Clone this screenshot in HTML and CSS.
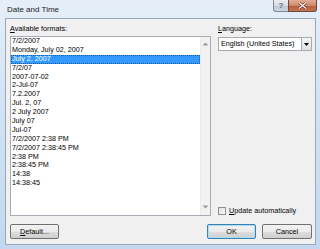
FILE: index.html
```html
<!DOCTYPE html>
<html>
<head>
<meta charset="utf-8">
<link rel="stylesheet" href="styles.css">
</head>
<body>
<div class="window">
  <div class="titlebar">
    <span class="title">Date and Time</span>
    <div class="controls">
      <span class="btn-help">?</span>
      <span class="btn-close"><svg width="9" height="7" viewBox="0 0 9 7"><path d="M1 0.5 L8 6.5 M8 0.5 L1 6.5" stroke="#5a2a1a" stroke-width="2.4"/><path d="M1 0.5 L8 6.5 M8 0.5 L1 6.5" stroke="#fff" stroke-width="1.2"/></svg></span>
    </div>
  </div>
  <div class="client">
    <div class="main">
      <div class="leftcol">
        <div class="label"><u>A</u>vailable formats:</div>
        <div class="listbox">
          <ul class="items">
            <li>7/2/2007</li>
            <li>Monday, July 02, 2007</li>
            <li class="selected">July 2, 2007</li>
            <li>7/2/07</li>
            <li>2007-07-02</li>
            <li>2-Jul-07</li>
            <li>7.2.2007</li>
            <li>Jul. 2, 07</li>
            <li>2 July 2007</li>
            <li>July 07</li>
            <li>Jul-07</li>
            <li>7/2/2007 2:38 PM</li>
            <li>7/2/2007 2:38:45 PM</li>
            <li>2:38 PM</li>
            <li>2:38:45 PM</li>
            <li>14:38</li>
            <li>14:38:45</li>
          </ul>
          <div class="scrollbar">
            <svg class="arrow" width="7" height="4" viewBox="0 0 7 4"><path d="M3.5 0.5 L6.5 3.5 L0.5 3.5 Z" fill="#9a9a9a"/></svg>
            <svg class="arrow" width="7" height="4" viewBox="0 0 7 4"><path d="M0.5 0.5 L6.5 0.5 L3.5 3.5 Z" fill="#9a9a9a"/></svg>
          </div>
        </div>
      </div>
      <div class="rightcol">
        <div class="label"><u>L</u>anguage:</div>
        <div class="combo">
          <span class="combo-text">English (United States)</span>
          <span class="combo-btn"><svg width="5" height="3" viewBox="0 0 5 3"><path d="M0 0 L5 0 L2.5 3 Z" fill="#000"/></svg></span>
        </div>
        <div class="spacer"></div>
        <label class="check">
          <span class="box"></span>
          <span><u>U</u>pdate automatically</span>
        </label>
      </div>
    </div>
    <div class="buttons">
      <span class="button"><u>D</u>efault...</span>
      <span class="grow"></span>
      <span class="button default">OK</span>
      <span class="button">Cancel</span>
    </div>
  </div>
</div>
</body>
</html>
```

FILE: styles.css
```css
* { box-sizing: border-box; }
html, body { margin: 0; padding: 0; }
body {
  width: 320px;
  height: 249px;
  overflow: hidden;
  font-family: "Liberation Sans", Arial, sans-serif;
  font-size: 7.2px;
  color: #000;
  background: linear-gradient(180deg, #e6eff9 0%, #d2e3f4 40%, #c3d8ef 100%);
}
.window {
  width: 320px;
  height: 249px;
  display: flex;
  flex-direction: column;
}
.titlebar {
  height: 18px;
  display: flex;
  align-items: flex-start;
  padding-left: 7px;
  flex: none;
}
.title {
  font-size: 8px;
  line-height: 10px;
  margin-top: 5px;
  color: #1a1a1a;
}
.controls {
  margin-left: auto;
  margin-right: 3px;
  display: flex;
}
.btn-help {
  width: 15px;
  height: 12px;
  border: 1px solid #7d8a9a;
  border-top: none;
  border-right: none;
  border-radius: 0 0 0 3px;
  background: linear-gradient(180deg, #e9edf2 0%, #d6dce4 50%, #bcc5d0 51%, #cdd6e0 100%);
  color: #5f6875;
  font-size: 8px;
  font-weight: bold;
  line-height: 11px;
  text-align: center;
}
.btn-close {
  width: 29px;
  height: 12px;
  border: 1px solid #6d4a3c;
  border-top: none;
  border-radius: 0 0 3px 0;
  background: linear-gradient(180deg, #e0ad92 0%, #cf8a69 50%, #b65836 51%, #c87656 100%);
  display: flex;
  align-items: center;
  justify-content: center;
}
.client {
  margin: 0 4px 4px 5px;
  height: 227px;
  border: 1px solid #9aa8ba;
  background: #f0f0f0;
  padding: 5px 3px 5px 4px;
  display: flex;
  flex-direction: column;
}
.main {
  display: flex;
  gap: 7px;
  height: 192px;
}
.label {
  height: 9px;
  line-height: 9px;
  margin-bottom: 3px;
  white-space: nowrap;
}
.leftcol {
  width: 201px;
  display: flex;
  flex-direction: column;
}
.listbox {
  height: 180px;
  border: 1px solid #a5acb5;
  background: #fff;
  display: flex;
}
.items {
  list-style: none;
  margin: 0;
  padding: 0;
  flex: 1;
}
.items li {
  height: 8.9px;
  line-height: 8.9px;
  padding-left: 1px;
  white-space: nowrap;
}
.items li.selected {
  background: #3399ff;
  color: #fff;
  border: 1px dotted #1a5c8c;
  line-height: 6.9px;
  padding-left: 0;
}
.scrollbar {
  width: 10px;
  background: #f2f2f2;
  border-left: 1px solid #ececec;
  display: flex;
  flex-direction: column;
  justify-content: space-between;
  align-items: center;
  padding: 5px 0 6px;
}
.arrow { display: block; }
.rightcol {
  width: 94px;
  display: flex;
  flex-direction: column;
}
.combo {
  height: 14px;
  margin-top: 1px;
  border: 1px solid #a5acb5;
  background: #fff;
  display: flex;
  align-items: center;
  padding-left: 2px;
}
.combo-text {
  flex: 1;
  white-space: nowrap;
  line-height: 12px;
}
.combo-btn {
  width: 10px;
  height: 12px;
  border-left: 1px solid #a5acb5;
  background: linear-gradient(180deg, #f5f5f5, #e0e0e0);
  display: flex;
  align-items: center;
  justify-content: center;
}
.spacer { flex: 1; }
.check {
  display: flex;
  align-items: center;
  gap: 3px;
  height: 9px;
  margin-bottom: 1px;
  white-space: nowrap;
}
.box {
  width: 8px;
  height: 8px;
  border: 1px solid #8e8f8f;
  background: linear-gradient(135deg, #dcdcdc, #fbfbfb);
  flex: none;
}
.buttons {
  display: flex;
  gap: 6px;
  margin-top: 8px;
  height: 15px;
}
.grow { flex: 1; }
.button {
  height: 15px;
  border: 1px solid #707070;
  border-radius: 2px;
  background: linear-gradient(180deg, #f2f2f2 0%, #ebebeb 50%, #dddddd 51%, #cfcfcf 100%);
  text-align: center;
  line-height: 13px;
  width: 50px;
}
.button:first-child { width: 49px; }
.button.default {
  width: 49px;
  border-color: #3c7fb1;
  box-shadow: inset 0 0 0 1px #a6e0f5;
}
```
